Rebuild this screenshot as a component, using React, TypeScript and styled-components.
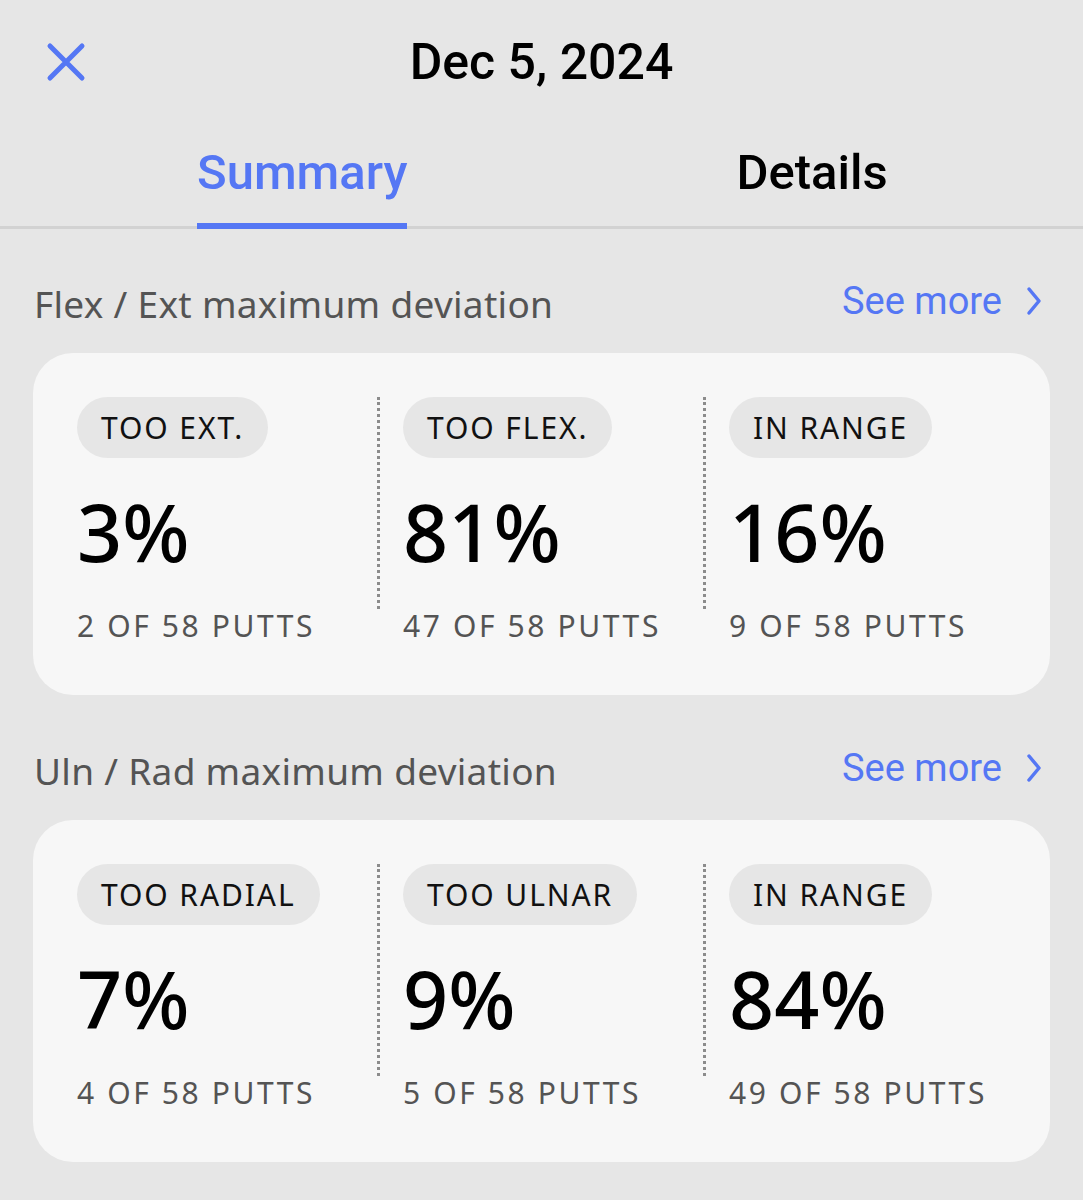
import React from "react";
import styled, { createGlobalStyle } from "styled-components";

const Global = createGlobalStyle`
  html, body { margin: 0; padding: 0; background: #e6e6e6; }
  body { font-family: "Noto Sans", "Open Sans", sans-serif; -webkit-font-smoothing: antialiased; }
`;

const BLUE = "#5577f4";

const Page = styled.div`
  width: 1083px;
  height: 1200px;
  background: #e6e6e6;
  overflow: hidden;
`;

const TopBar = styled.div`
  height: 124px;
  display: flex;
  align-items: center;
  justify-content: center;
  position: relative;
`;

const CloseBtn = styled.button`
  position: absolute;
  left: 40px;
  top: 36px;
  width: 52px;
  height: 52px;
  border: 0;
  background: transparent;
  padding: 0;
  display: flex;
  align-items: center;
  justify-content: center;
`;

const DateTitle = styled.h1`
  margin: 0;
  font-family: Roboto, sans-serif;
  font-weight: 500;
  font-size: 50px;
  color: #000;
  letter-spacing: 0px;
`;

const Tabs = styled.div`
  display: flex;
  gap: 329px;
  padding-left: 197px;
  padding-top: 19px;
  border-bottom: 3px solid #d2d2d2;
`;

const Tab = styled.div<{ $active?: boolean }>`
  font-family: Roboto, sans-serif;
  font-weight: 500;
  font-size: 49px;
  color: ${(p) => (p.$active ? BLUE : "#000")};
  padding: 0 0 20px;
  margin-bottom: -3px;
  border-bottom: 6px solid ${(p) => (p.$active ? BLUE : "transparent")};
  line-height: 60px;
`;

const Content = styled.div`
  padding: 50px 33px 0 33px;
  display: flex;
  flex-direction: column;
`;

const SectionHead = styled.div`
  display: flex;
  align-items: center;
  justify-content: space-between;
  height: 48px;
  margin-bottom: 26px;
`;

const SectionTitle = styled.div`
  font-size: 37px;
  color: #545454;
  padding-left: 1px;
  letter-spacing: 0.3px;
`;

const SeeMore = styled.div`
  display: flex;
  align-items: center;
  gap: 24px;
  color: ${BLUE};
  font-family: Roboto, sans-serif;
  font-size: 38px;
  padding-right: 8px;
  margin-top: -4px;
`;

const Card = styled.div`
  background: #f7f7f7;
  border-radius: 40px;
  height: 342px;
  box-sizing: border-box;
  padding: 44px 0 0 44px;
  display: grid;
  grid-template-columns: 300px 326px 326px;
  margin-bottom: 51px;
`;

const Col = styled.div<{ $divided?: boolean }>`
  position: relative;
  padding-left: ${(p) => (p.$divided ? "26px" : "0")};
  display: flex;
  flex-direction: column;
  align-items: flex-start;
`;

const Divider = styled.div`
  position: absolute;
  left: 0;
  top: 0;
  height: 212px;
  border-left: 3px dotted #8c8c8c;
`;

const Pill = styled.div`
  height: 61px;
  border-radius: 31px;
  background: #e6e6e6;
  padding: 0 24px;
  display: flex;
  align-items: center;
  font-size: 30px;
  letter-spacing: 1.9px;
  color: #111;
`;

const Percent = styled.div`
  font-size: 79px;
  font-weight: 500;
  color: #000;
  line-height: 1;
  margin-top: 34px;
  letter-spacing: 0px;
`;

const Count = styled.div`
  font-size: 30px;
  color: #545454;
  letter-spacing: 2.6px;
  margin-top: 34px;
`;

type Stat = { label: string; pct: string; count: string };

const sections: { title: string; stats: Stat[] }[] = [
  {
    title: "Flex / Ext maximum deviation",
    stats: [
      { label: "TOO EXT.", pct: "3%", count: "2 OF 58 PUTTS" },
      { label: "TOO FLEX.", pct: "81%", count: "47 OF 58 PUTTS" },
      { label: "IN RANGE", pct: "16%", count: "9 OF 58 PUTTS" },
    ],
  },
  {
    title: "Uln / Rad maximum deviation",
    stats: [
      { label: "TOO RADIAL", pct: "7%", count: "4 OF 58 PUTTS" },
      { label: "TOO ULNAR", pct: "9%", count: "5 OF 58 PUTTS" },
      { label: "IN RANGE", pct: "84%", count: "49 OF 58 PUTTS" },
    ],
  },
];

export default function App() {
  return (
    <Page>
      <Global />
      <TopBar>
        <CloseBtn aria-label="Close">
          <svg width="40" height="40" viewBox="0 0 40 40">
            <path d="M4 4 L36 36 M36 4 L4 36" stroke={BLUE} strokeWidth="5" strokeLinecap="round" />
          </svg>
        </CloseBtn>
        <DateTitle>Dec 5, 2024</DateTitle>
      </TopBar>
      <Tabs>
        <Tab $active>Summary</Tab>
        <Tab>Details</Tab>
      </Tabs>
      <Content>
        {sections.map((s) => (
          <React.Fragment key={s.title}>
            <SectionHead>
              <SectionTitle>{s.title}</SectionTitle>
              <SeeMore>
                See more
                <svg width="16" height="30" viewBox="0 0 16 30">
                  <path d="M3 3 L13 15 L3 27" stroke={BLUE} strokeWidth="3.5" fill="none" strokeLinecap="round" strokeLinejoin="round" />
                </svg>
              </SeeMore>
            </SectionHead>
            <Card>
              {s.stats.map((st, i) => (
                <Col key={i} $divided={i > 0}>
                  {i > 0 && <Divider />}
                  <Pill>{st.label}</Pill>
                  <Percent>{st.pct}</Percent>
                  <Count>{st.count}</Count>
                </Col>
              ))}
            </Card>
          </React.Fragment>
        ))}
      </Content>
    </Page>
  );
}
